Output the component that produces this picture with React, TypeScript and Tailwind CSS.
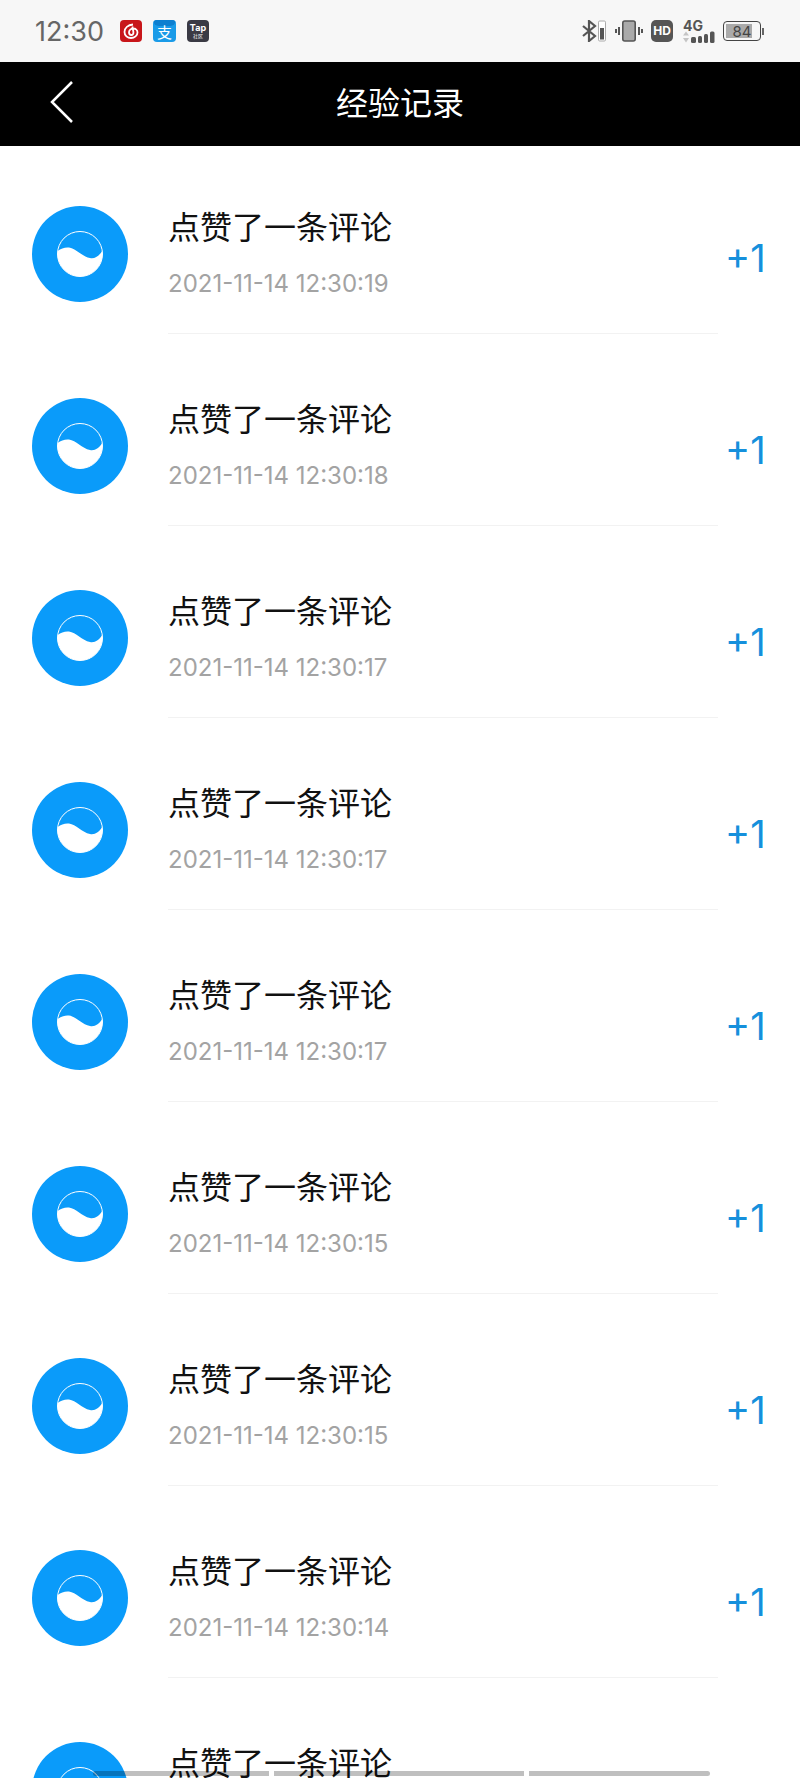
const times = [
  "2021-11-14 12:30:19",
  "2021-11-14 12:30:18",
  "2021-11-14 12:30:17",
  "2021-11-14 12:30:17",
  "2021-11-14 12:30:17",
  "2021-11-14 12:30:15",
  "2021-11-14 12:30:15",
  "2021-11-14 12:30:14",
  "2021-11-14 12:30:13",
];

const Avatar = () => (
  <svg viewBox="0 0 96 96" className="h-24 w-24 shrink-0">
    <circle cx="48" cy="48" r="48" fill="#0a9bfa" />
    <circle cx="48" cy="48" r="22.5" fill="none" stroke="#fff" strokeWidth="1" />
    <path
      d="M25.7 45 C29 42.5 33 41 37 41.5 C44 42.5 50 50.5 58 52 C63 53 67 50 70.3 45 A22.5 22.5 0 1 1 25.7 45 Z"
      fill="#fff"
    />
  </svg>
);

const AppIcons = () => (
  <div className="ml-4 flex items-center gap-[11px]">
    <svg viewBox="0 0 22 22" className="h-[22px] w-[22px]">
      <rect width="22" height="22" rx="4" fill="#c8161a" />
      <path
        d="M13 4.5 C8 5 4.5 8 4.5 12 C4.5 15.5 7.5 18 11 18 C14.5 18 17.5 15.5 17.5 12.5 C17.5 10 15.5 8.5 13.5 8.5 C11 8.5 9 10.2 9 12.3 C9 13.8 10 15 11.3 15 C12.8 15 13.6 13.7 13.4 12 L12.4 6.5"
        fill="none"
        stroke="#fff"
        strokeWidth="1.8"
      />
    </svg>
    <div className="flex h-[22px] w-[23px] flex-col items-center overflow-hidden rounded bg-[#1a9be8] text-white">
      <div className="h-[6px] w-full rounded-b-[6px] bg-[#0d7fd0]" />
      <span className="mt-[-1px] text-[15px] leading-[16px]">支</span>
    </div>
    <div className="flex h-[22px] w-[22px] flex-col items-center justify-center rounded bg-[#3a3a44] text-white">
      <span className="text-[9px] leading-[10px] font-bold">Tap</span>
      <span className="text-[5px] leading-[6px]">社区</span>
    </div>
  </div>
);

const StatusIcons = () => (
  <div className="flex items-center">
    <svg viewBox="0 0 24 22" className="h-[22px] w-6">
      <path d="M1 6 L13 16 L7 21 V1 L13 6 L1 16" fill="none" stroke="#555" strokeWidth="2.2" />
      <rect x="16.5" y="1" width="7" height="20" rx="1.2" fill="#fff" stroke="#aaa" />
      <rect x="18" y="8" width="4" height="11.5" fill="#555" />
    </svg>
    <svg viewBox="0 0 28 22" className="ml-[9px] h-[22px] w-7">
      <rect x="7.8" y="1" width="12.4" height="20" rx="2" fill="#aaa" stroke="#555" strokeWidth="1.6" />
      <path d="M4 7 V15 M1 9 V13 M24 7 V15 M27 9 V13" stroke="#555" strokeWidth="2" />
    </svg>
    <div className="ml-2 flex h-[22px] w-[22px] items-center justify-center rounded-[5px] bg-[#555] text-[12px] leading-none font-bold text-white">
      HD
    </div>
    <div className="ml-[10px] flex flex-col">
      <span className="text-[14px] leading-[11px] font-bold text-[#555]">4G</span>
      <svg viewBox="0 0 34 12" className="h-3 w-[34px]">
        <path d="M3 0.5 L6 4.5 H0 Z M3 11.5 L0 7 H6 Z" fill="#c4c4c4" />
        <rect x="8" y="6" width="5" height="6" rx="1.5" fill="#555" />
        <rect x="15" y="5" width="4" height="7" rx="1.5" fill="#555" />
        <rect x="21" y="3" width="4" height="9" rx="1.5" fill="#555" />
        <rect x="27" y="0.5" width="4.5" height="11.5" rx="1.5" fill="#555" />
      </svg>
    </div>
    <div className="ml-[6px] flex items-center">
      <div className="relative flex h-[20px] w-[38px] items-center rounded-[4px] border-[1.5px] border-[#444] p-[2px]">
        <div className="h-full w-[26px] bg-[#aaa]" />
        <span className="absolute inset-0 flex items-center justify-center text-[15px] leading-none text-[#444]">
          84
        </span>
      </div>
      <div className="ml-[1px] h-[7px] w-[2px] bg-[#666]" />
    </div>
  </div>
);

const Row = ({ time }: { time: string }) => (
  <div className="flex h-[188px] shrink-0 pt-[60px] pl-8">
    <Avatar />
    <div className="ml-10 flex h-[128px] w-[550px] flex-col border-b border-[#f2f2f2]">
      <p className="mt-[2px] text-[32px] leading-[40px] text-[#111]">点赞了一条评论</p>
      <p className="mt-[21px] text-[24px] leading-[30px] text-[#a3a3a3]">{time}</p>
    </div>
    <p className="mt-[30px] ml-[7px] text-[38px] leading-[44px] text-[#1590dc]">+1</p>
  </div>
);

export default function App() {
  return (
    <div className="relative flex h-[1778px] w-[800px] flex-col overflow-hidden bg-white font-['Inter','Noto_Sans_CJK_SC',sans-serif]">
      <div className="flex h-[62px] shrink-0 items-center justify-between bg-[#f7f7f7] pr-[36px] pl-[35px]">
        <div className="flex items-center">
          <span className="text-[27px] leading-none text-[#666]">12:30</span>
          <AppIcons />
        </div>
        <StatusIcons />
      </div>
      <div className="relative flex h-[84px] shrink-0 items-center justify-center bg-black">
        <svg viewBox="0 0 24 44" className="absolute top-[18px] left-[50px] h-[44px] w-6">
          <path d="M22 2 L2 22 L22 42" fill="none" stroke="#fff" strokeWidth="2.5" />
        </svg>
        <span className="text-[32px] leading-none text-white">经验记录</span>
      </div>
      <div className="flex flex-col gap-1">
        {times.map((t, i) => (
          <Row key={i} time={t} />
        ))}
      </div>
      <div className="absolute bottom-[2px] left-[93px] flex h-[5px] gap-[5px]">
        <div className="w-[176px] rounded-l-sm bg-black/25" />
        <div className="w-[250px] bg-black/25" />
        <div className="w-[181px] rounded-r-sm bg-black/25" />
      </div>
    </div>
  );
}
